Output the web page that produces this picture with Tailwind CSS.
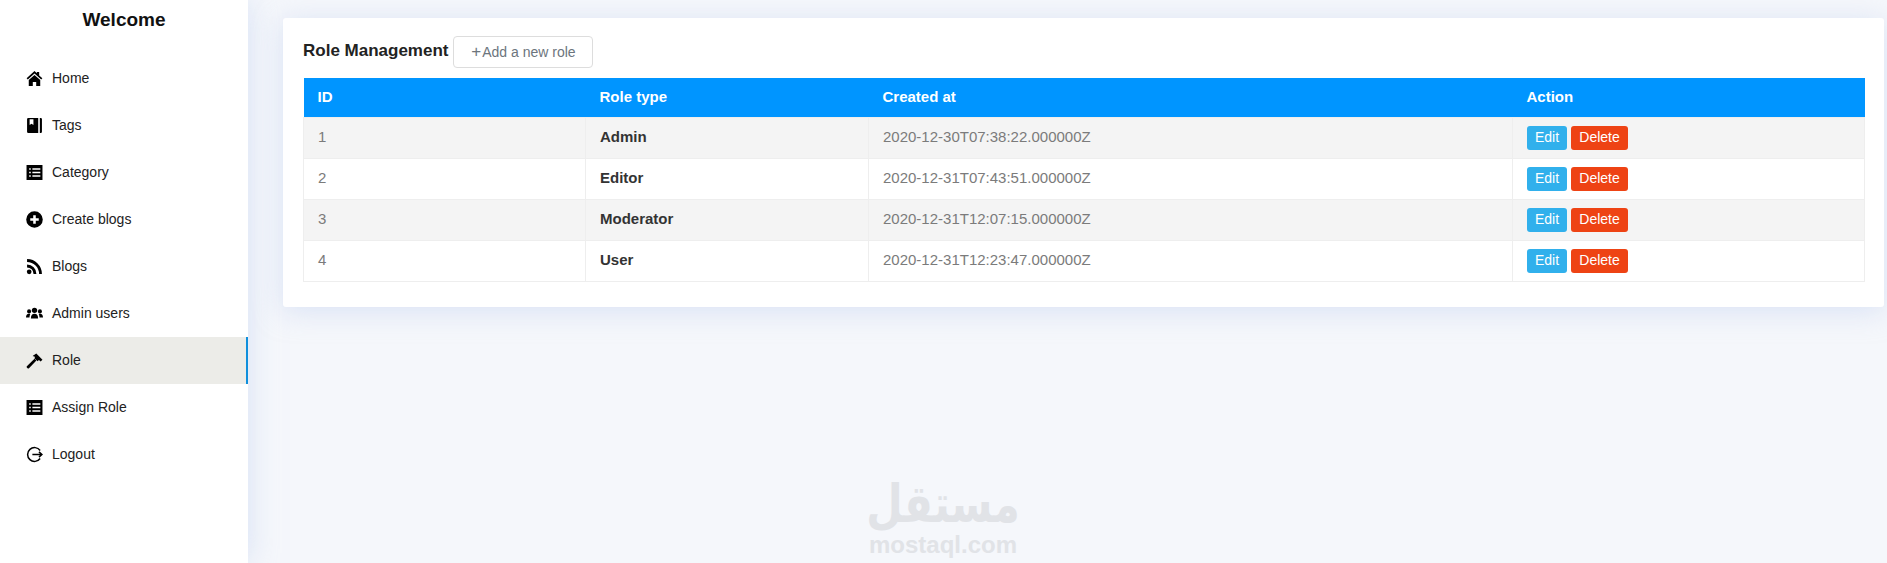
<!DOCTYPE html>
<html lang="en">
<head>
    <meta charset="utf-8">
    <title>Role Management</title>
    <script src="https://cdn.jsdelivr.net/npm/@tailwindcss/browser@4"></script>
</head>
<body class="font-['Liberation_Sans',Arial,sans-serif] bg-[#f5f7fb] text-[#212529]">
<div class="relative flex h-[563px] w-full overflow-hidden">
    <!-- sidebar -->
    <aside class="w-[248px] shrink-0 bg-white shadow-[0_0_28px_rgba(190,205,240,.55)] z-10">
        <h1 class="h-[55px] pt-[9px] text-center text-[19px] leading-[22px] font-bold text-[#111]">Welcome</h1>
        <nav class="text-[14px] text-[#222]">
            <a class="flex items-center h-[47px] pl-[26px] gap-[9px]">
                <svg class="w-[17px] h-[17px] text-black" viewBox="0 0 16 16" fill="currentColor"><path d="M8 1 .6 7.800l1.100 1.200L8 3.400 14.300 9l1.100-1.200-3-2.700V1.800h-2.200v1.300z"/><path d="M8 4.600 2.600 9.400V15h3.800v-3.800h3.200V15h3.800V9.400z"/></svg>
                <span>Home</span>
            </a>
            <a class="flex items-center h-[47px] pl-[26px] gap-[9px]">
                <svg class="w-[17px] h-[17px] text-black" viewBox="0 0 16 16" fill="currentColor"><path fill-rule="evenodd" d="M2.200 1h9.300v14H2.200A1.200 1.200 0 0 1 1 13.800V2.200A1.200 1.200 0 0 1 2.200 1zM3.400 2v5.600l1.800-1.300 1.800 1.300V2z"/><path d="M13 1h.7c.7 0 1.300.5 1.300 1.200v11.600c0 .7-.6 1.200-1.300 1.200H13z"/></svg>
                <span>Tags</span>
            </a>
            <a class="flex items-center h-[47px] pl-[26px] gap-[9px]">
                <svg class="w-[17px] h-[17px] text-black" viewBox="0 0 16 16" fill="currentColor"><path fill-rule="evenodd" d="M.5 1h15v14H.5zM3 4v1.500h1.500V4zm3 0v1.500h7.500V4zM3 7.200v1.500h1.500V7.200zm3 0v1.500h7.500V7.200zm-3 3.300V12h1.500v-1.500zm3 0V12h7.500v-1.500z"/></svg>
                <span>Category</span>
            </a>
            <a class="flex items-center h-[47px] pl-[26px] gap-[9px]">
                <svg class="w-[17px] h-[17px] text-black" viewBox="0 0 16 16" fill="currentColor"><path fill-rule="evenodd" d="M8 .2a7.800 7.800 0 1 1 0 15.600A7.800 7.800 0 0 1 8 .2zM6.800 4v2.800H4v2.400h2.800V12h2.400V9.200H12V6.800H9.200V4z"/></svg>
                <span>Create blogs</span>
            </a>
            <a class="flex items-center h-[47px] pl-[26px] gap-[9px]">
                <svg class="w-[17px] h-[17px] text-black" viewBox="0 0 16 16" fill="currentColor"><circle cx="3" cy="13" r="2.200"/><path d="M1 6.200v2.700A6.100 6.100 0 0 1 7.100 15h2.700A8.800 8.800 0 0 0 1 6.200z"/><path d="M1 1v2.700A11.300 11.300 0 0 1 12.300 15H15A14 14 0 0 0 1 1z"/></svg>
                <span>Blogs</span>
            </a>
            <a class="flex items-center h-[47px] pl-[26px] gap-[9px]">
                <svg class="w-[17px] h-[17px] text-black" viewBox="0 0 16 16" fill="currentColor"><circle cx="8" cy="5" r="2.500"/><path d="M4.600 12.800c0-2.800 1-4.500 3.400-4.500s3.400 1.700 3.400 4.500z"/><circle cx="2.900" cy="6" r="1.900"/><path d="M0 11.800c0-2.200.9-3.500 2.800-3.500.5 0 .9.100 1.200.3-.5.800-.7 1.900-.7 3.200z"/><circle cx="13.100" cy="6" r="1.900"/><path d="M16 11.800c0-2.200-.9-3.500-2.800-3.500-.5 0-.9.100-1.200.3.500.8.700 1.900.7 3.200z"/></svg>
                <span>Admin users</span>
            </a>
            <a class="flex items-center h-[47px] pl-[26px] gap-[9px] bg-[#ecece8] border-r-2 border-[#0f8fdc]">
                <svg class="w-[17px] h-[17px] text-black" viewBox="0 0 16 16" fill="currentColor"><path d="M.8 13.300 8 6.300l1.800 1.800-7 7.100a.9.9 0 0 1-1.300 0l-.7-.7a.9.9 0 0 1 0-1.200z"/><path d="M6.500 3.600 9.700 1.500l5.800 5.700-1.800 1.800-1.500-1.400-1.300 1.200-3-3 .6-1.200c-.7-.6-1.500-.8-2-.5z"/></svg>
                <span>Role</span>
            </a>
            <a class="flex items-center h-[47px] pl-[26px] gap-[9px]">
                <svg class="w-[17px] h-[17px] text-black" viewBox="0 0 16 16" fill="currentColor"><path fill-rule="evenodd" d="M.5 1h15v14H.5zM3 4v1.500h1.500V4zm3 0v1.500h7.500V4zM3 7.200v1.500h1.500V7.200zm3 0v1.500h7.500V7.200zm-3 3.300V12h1.500v-1.500zm3 0V12h7.500v-1.500z"/></svg>
                <span>Assign Role</span>
            </a>
            <a class="flex items-center h-[47px] pl-[26px] gap-[9px]">
                <svg class="w-[17px] h-[17px] text-black" viewBox="0 0 16 16" fill="none" stroke="currentColor" stroke-width="1.400"><path d="M13.300 4.200A6.500 6.500 0 1 0 13.300 11.800"/><path d="M6 8h9M12.200 5.500 15 8l-2.800 2.500"/></svg>
                <span>Logout</span>
            </a>
        </nav>
    </aside>

    <!-- content -->
    <main class="flex-1 min-w-0 pl-[35px] pr-[3px] pt-[18px]">
        <section class="h-[289px] bg-white rounded-[3px] pl-[20px] pr-[19px] pt-[18px] shadow-[0_4px_28px_rgba(190,205,240,.5)]">
            <div class="flex items-center h-[32px] mb-[10px]">
                <h2 class="text-[17px] font-bold text-[#222] -mt-[3px]">Role Management</h2>
                <button class="ml-[5px] w-[140px] h-[32px] border border-[#dddddd] rounded-[4px] text-[14px] text-[#6c757d]"><span class="text-[17px] leading-[14px] mr-[1px]">+</span>Add a new role</button>
            </div>
            <table class="w-full table-fixed text-[15px] border-collapse">
                <thead class="bg-[#0095ff] text-white">
                    <tr class="h-[39px] text-left font-bold">
                        <th class="w-[282px] pl-[14px]">ID</th>
                        <th class="w-[283px] pl-[14px]">Role type</th>
                        <th class="w-[644px] pl-[14px]">Created at</th>
                        <th class="pl-[14px]">Action</th>
                    </tr>
                </thead>
                <tbody>
                    <tr class="h-[41px] bg-[#f4f4f4]">
                        <td class="pl-[14px] border border-[#eeeeee] text-[#7b7b7b]">1</td>
                        <td class="pl-[14px] border border-[#eeeeee] font-bold text-[#333]">Admin</td>
                        <td class="pl-[14px] border border-[#eeeeee] text-[#7b7b7b]">2020-12-30T07:38:22.000000Z</td>
                        <td class="pl-[14px] border border-[#eeeeee]">
                            <div class="flex gap-[4px]">
                                <button class="w-[40px] h-[24px] rounded-[3px] bg-[#31b0ec] text-[14px] text-white">Edit</button>
                                <button class="w-[57px] h-[24px] rounded-[3px] bg-[#ee4314] text-[14px] text-white">Delete</button>
                            </div>
                        </td>
                    </tr>
                    <tr class="h-[41px] bg-white">
                        <td class="pl-[14px] border border-[#eeeeee] text-[#7b7b7b]">2</td>
                        <td class="pl-[14px] border border-[#eeeeee] font-bold text-[#333]">Editor</td>
                        <td class="pl-[14px] border border-[#eeeeee] text-[#7b7b7b]">2020-12-31T07:43:51.000000Z</td>
                        <td class="pl-[14px] border border-[#eeeeee]">
                            <div class="flex gap-[4px]">
                                <button class="w-[40px] h-[24px] rounded-[3px] bg-[#31b0ec] text-[14px] text-white">Edit</button>
                                <button class="w-[57px] h-[24px] rounded-[3px] bg-[#ee4314] text-[14px] text-white">Delete</button>
                            </div>
                        </td>
                    </tr>
                    <tr class="h-[41px] bg-[#f4f4f4]">
                        <td class="pl-[14px] border border-[#eeeeee] text-[#7b7b7b]">3</td>
                        <td class="pl-[14px] border border-[#eeeeee] font-bold text-[#333]">Moderator</td>
                        <td class="pl-[14px] border border-[#eeeeee] text-[#7b7b7b]">2020-12-31T12:07:15.000000Z</td>
                        <td class="pl-[14px] border border-[#eeeeee]">
                            <div class="flex gap-[4px]">
                                <button class="w-[40px] h-[24px] rounded-[3px] bg-[#31b0ec] text-[14px] text-white">Edit</button>
                                <button class="w-[57px] h-[24px] rounded-[3px] bg-[#ee4314] text-[14px] text-white">Delete</button>
                            </div>
                        </td>
                    </tr>
                    <tr class="h-[41px] bg-white">
                        <td class="pl-[14px] border border-[#eeeeee] text-[#7b7b7b]">4</td>
                        <td class="pl-[14px] border border-[#eeeeee] font-bold text-[#333]">User</td>
                        <td class="pl-[14px] border border-[#eeeeee] text-[#7b7b7b]">2020-12-31T12:23:47.000000Z</td>
                        <td class="pl-[14px] border border-[#eeeeee]">
                            <div class="flex gap-[4px]">
                                <button class="w-[40px] h-[24px] rounded-[3px] bg-[#31b0ec] text-[14px] text-white">Edit</button>
                                <button class="w-[57px] h-[24px] rounded-[3px] bg-[#ee4314] text-[14px] text-white">Delete</button>
                            </div>
                        </td>
                    </tr>
                </tbody>
            </table>
        </section>
    </main>

    <!-- watermark -->
    <div class="absolute left-[858px] top-[476px] w-[170px] text-center text-[#e1e3e7] font-bold">
        <div dir="rtl" lang="ar" class="font-['DejaVu_Sans','Noto_Sans',sans-serif] text-[42px] leading-[56px] scale-y-[1.25]">مستقل</div>
        <div class="text-[24px] leading-[26px]">mostaql.com</div>
    </div>
</div>
</body>
</html>
